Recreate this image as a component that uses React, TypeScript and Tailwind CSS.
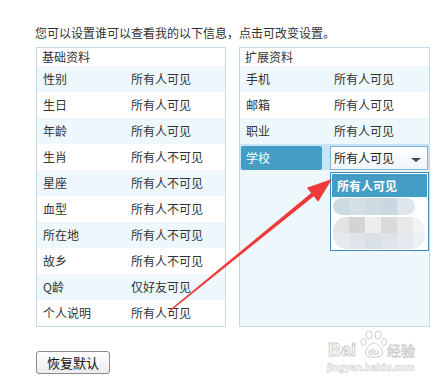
import React from "react";

const basic: [string, string][] = [
  ["性别", "所有人可见"],
  ["生日", "所有人可见"],
  ["年龄", "所有人可见"],
  ["生肖", "所有人不可见"],
  ["星座", "所有人不可见"],
  ["血型", "所有人不可见"],
  ["所在地", "所有人不可见"],
  ["故乡", "所有人不可见"],
  ["Q龄", "仅好友可见"],
  ["个人说明", "所有人可见"],
];

const ext: [string, string][] = [
  ["手机", "所有人可见"],
  ["邮箱", "所有人可见"],
  ["职业", "所有人可见"],
];

function Row({ label, value, i }: { label: string; value: string; i: number }) {
  return (
    <div className={`flex h-[26px] items-center text-[12px] text-[#333] ${i % 2 === 0 ? "bg-[#edf7fc]" : "bg-white"}`}>
      <div className="w-[94px] pl-[6px]">{label}</div>
      <div>{value}</div>
    </div>
  );
}

export default function App() {
  return (
    <div
      className="relative w-[445px] h-[385px] bg-white overflow-hidden"
      style={{ fontFamily: '"Noto Sans CJK SC", "Noto Sans", sans-serif' }}
    >
      <div className="pt-[26px] pl-[35px] text-[12px] leading-[14px] text-[#333]">
        您可以设置谁可以查看我的以下信息，点击可改变设置。
      </div>
      <div className="mt-[7px] flex gap-[13px] pl-[36px]">
        <div className="w-[190px] h-[280px] border border-[#c6d9e6] flex flex-col">
          <div className="h-[18px] flex items-center pl-[5px] text-[12px] text-[#333] bg-white">基础资料</div>
          {basic.map(([l, v], i) => (
            <Row key={l} label={l} value={v} i={i} />
          ))}
        </div>
        <div className="relative w-[191px] h-[280px] border border-[#c6d9e6] flex flex-col">
          <div className="h-[18px] flex items-center pl-[5px] text-[12px] text-[#333] bg-white">扩展资料</div>
          {ext.map(([l, v], i) => (
            <Row key={l} label={l} value={v} i={i} />
          ))}
          <div className="h-[26px] flex items-start bg-[#c9e4f6] pt-[2px] pl-[1px]">
            <div className="w-[81px] h-[24px] rounded-[2px] bg-[#449dc5] text-white text-[12px] flex items-center pl-[5px]">
              学校
            </div>
            <div className="ml-[8px] w-[98px] h-[24px] border border-[#7fb2d6] bg-gradient-to-b from-white to-[#eef5fa] flex items-center pl-[3px] text-[12px] text-[#222] relative">
              所有人可见
              <div className="absolute right-[6px] top-[11px] w-0 h-0 border-l-[5px] border-r-[5px] border-t-[4px] border-l-transparent border-r-transparent border-t-[#2f4a60]" />
            </div>
          </div>
          <div className="flex-1 bg-[#edf7fc]" />
          <div className="absolute left-[90px] top-[124px] w-[99px] h-[79px] border border-[#3d8bc4] bg-white p-[1px]">
            <div className="h-[23px] bg-[#449dc5] text-white text-[12px] font-bold flex items-center pl-[5px]">所有人可见</div>
            <div className="relative h-[53px]">
              <div className="absolute left-[1px] top-[1px] w-[82px] h-[17px] rounded-full overflow-hidden flex blur-[0.5px]">
                <div className="w-[16px] bg-[#ccdbe2]" />
                <div className="w-[16px] bg-[#d3e0e6]" />
                <div className="w-[16px] bg-[#cddce3]" />
                <div className="w-[16px] bg-[#c9d8e0]" />
                <div className="w-[18px] bg-[#dce6eb]" />
              </div>
              <div className="absolute left-[1px] top-[20px] w-[92px] h-[32px] rounded-[14px] overflow-hidden flex flex-col blur-[0.5px]">
                <div className="flex h-[16px]">
                  <div className="w-[16px] bg-[#e4e4e4]" />
                  <div className="w-[16px] bg-[#d4d4d4]" />
                  <div className="w-[16px] bg-[#ededed]" />
                  <div className="w-[16px] bg-[#dadada]" />
                  <div className="w-[16px] bg-[#e8e8e8]" />
                  <div className="w-[12px] bg-[#f3f3f3]" />
                </div>
                <div className="flex h-[16px]">
                  <div className="w-[16px] bg-[#e6eaed]" />
                  <div className="w-[16px] bg-[#dfe5ea]" />
                  <div className="w-[16px] bg-[#d8e0e6]" />
                  <div className="w-[16px] bg-[#dde4ea]" />
                  <div className="w-[16px] bg-[#e3e9ee]" />
                  <div className="w-[12px] bg-[#eef1f3]" />
                </div>
              </div>
            </div>
          </div>
        </div>
      </div>
      <div className="mt-[24px] ml-[36px] w-[74px] h-[23px] rounded-[3px] border border-[#8a8a8a] bg-gradient-to-b from-white to-[#ececec] flex items-center justify-center text-[13px] text-[#111]">
        恢复默认
      </div>

      {/* watermark */}
      <div className="absolute left-[327px] top-[329px] w-[95px] h-[46px] select-none">
        <div
          className="absolute left-[1px] top-[12px] text-[18px] font-bold leading-[18px] text-white [-webkit-text-stroke:1px_#cfcfcf]"
          style={{ fontFamily: '"Liberation Sans", sans-serif' }}
        >
          Bai
        </div>
        <svg className="absolute left-[33px] top-0" width="28" height="30" viewBox="0 0 28 30">
          <g fill="white" stroke="#cfcfcf" strokeWidth="1">
            <ellipse cx="9" cy="6" rx="3" ry="4" />
            <ellipse cx="18" cy="6" rx="3" ry="4" />
            <ellipse cx="3.5" cy="13" rx="2.5" ry="3.5" />
            <ellipse cx="24" cy="13" rx="2.5" ry="3.5" />
            <path d="M6 26 C4 21 10 14 14 14 C18 14 24 21 22 26 C20 29 8 29 6 26 Z" />
          </g>
          <text x="8" y="26" fontSize="9" fontWeight="bold" fill="#cfcfcf" fontFamily="Liberation Sans, sans-serif">du</text>
        </svg>
        <div className="absolute left-[60px] top-[13px] text-[14px] leading-[16px] text-white [-webkit-text-stroke:0.8px_#cfcfcf]">
          经验
        </div>
        <div
          className="absolute left-[0px] top-[33px] text-[10px] leading-[11px] font-bold text-white [-webkit-text-stroke:0.6px_#d2d2d2]"
          style={{ fontFamily: '"Liberation Sans", sans-serif' }}
        >
          jingyan.baidu.com
        </div>
      </div>

      {/* red arrow */}
      <svg className="absolute left-0 top-0 pointer-events-none" width="445" height="385">
        <polygon
          points="169.6,310 311.2,193.1 306.8,187.7 332,179 318.2,201.7 313.8,196.3 170.6,311"
          fill="#f03a3a"
        />
      </svg>
    </div>
  );
}
